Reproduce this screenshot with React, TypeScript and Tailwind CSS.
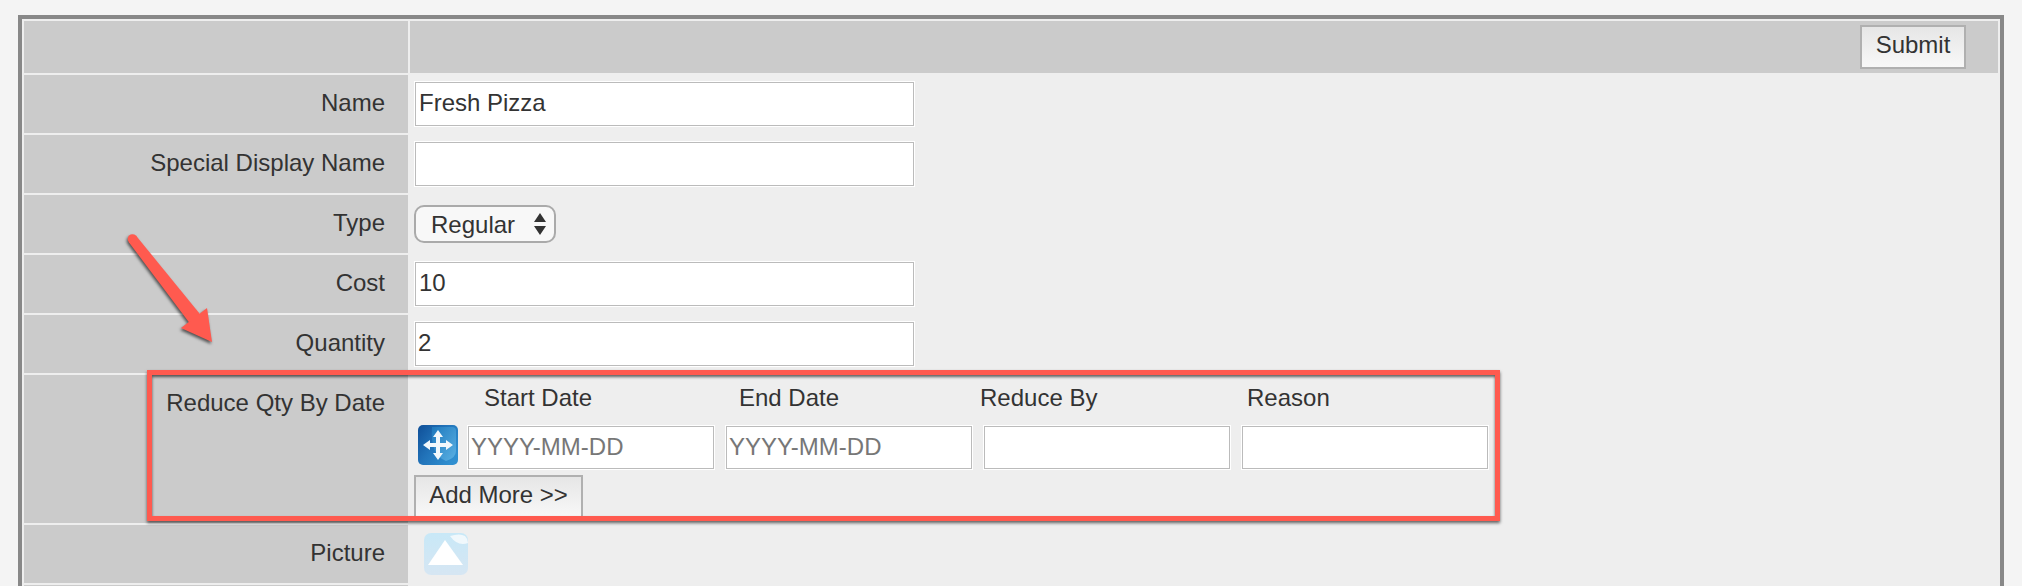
import React from "react";

function Field({ value, placeholder, className }: { value?: string; placeholder?: string; className: string }) {
  return (
    <input
      readOnly
      value={value ?? ""}
      placeholder={placeholder}
      className={`border border-white bg-white pb-[2px] pr-[3px] text-[24px] text-[#333] shadow-[inset_0_0_0_1px_#bbb] outline-none placeholder:text-[#777] ${className}`}
    />
  );
}

function Row({ label, children }: { label: string; children: React.ReactNode }) {
  return (
    <div className="flex h-[58px]">
      <div className="flex w-[384px] items-center justify-end bg-[#cbcbcb] pb-[3px] pr-[23px]">{label}</div>
      <div className="flex flex-1 items-center pl-[6px]">{children}</div>
    </div>
  );
}

function MoveIcon() {
  return (
    <svg viewBox="0 0 40 40" className="h-[40px] w-[40px] shrink-0">
      <defs>
        <linearGradient id="mv" x1="0" y1="0" x2="1" y2="0.7">
          <stop offset="0" stopColor="#0f4f98" />
          <stop offset="0.5" stopColor="#2274ba" />
          <stop offset="1" stopColor="#2f8fd0" />
        </linearGradient>
        <linearGradient id="mv2" x1="0" y1="0" x2="1" y2="1">
          <stop offset="0" stopColor="#1f7cc0" />
          <stop offset="1" stopColor="#62b6e6" />
        </linearGradient>
      </defs>
      <rect width="40" height="40" rx="5" fill="url(#mv)" />
      <path d="M14 2H34Q38 2 38 6V26Q38 33 28 36Q12 30 14 2Z" fill="url(#mv2)" opacity="0.85" />
      <path
        className="blur-[0.5px]"
        d="M20 5L25 12H22V18H28V15L35 20L28 25V22H22V28H25L20 35L15 28H18V22H12V25L5 20L12 15V18H18V12H15Z"
        fill="#f2f8fc"
      />
    </svg>
  );
}

function PictureIcon() {
  return (
    <svg viewBox="0 0 44 42" className="h-[42px] w-[44px] blur-[0.5px]">
      <defs>
        <linearGradient id="pc" x1="0" y1="0" x2="0" y2="1">
          <stop offset="0" stopColor="#c8e8f7" />
          <stop offset="1" stopColor="#d6e6f3" />
        </linearGradient>
      </defs>
      <rect width="44" height="42" rx="7" fill="url(#pc)" />
      <path d="M26 3Q36 0 41 3Q44 6 44 10Q34 14 26 3Z" fill="#f0f8fc" />
      <path d="M21 7L39 32H4Z" fill="#ffffff" />
    </svg>
  );
}

export default function App() {
  return (
    <div className="relative h-[586px] w-[2022px] overflow-hidden bg-[#f4f4f4] pl-[18px] pt-[15px] font-['Liberation_Sans',Arial,sans-serif] text-[24px] text-[#333]">
      <div className="flex w-[1986px] flex-col gap-[2px] border-4 border-[#888] bg-[#eee] p-[2px]">
        <div className="flex h-[52px] gap-[2px]">
          <div className="w-[384px] bg-[#cbcbcb]" />
          <div className="flex flex-1 items-start justify-end bg-[#cbcbcb] pr-[32px] pt-[4px]">
            <button className="h-[44px] w-[106px] border-2 border-[#b0b0b0] bg-gradient-to-b from-[#e6e6e6] to-[#f8f8f8] pb-[4px]">
              Submit
            </button>
          </div>
        </div>
        <Row label="Name">
          <Field value="Fresh Pizza" className="h-[46px] w-[501px] pl-[4px]" />
        </Row>
        <Row label="Special Display Name">
          <Field className="h-[46px] w-[501px] pl-[4px]" />
        </Row>
        <Row label="Type">
          <div className="relative h-[38px] w-[142px]">
            <select className="h-full w-full appearance-none rounded-[10px] border-2 border-[#aaa] bg-[#f8f8f8] pb-[3px] pl-[15px] outline-none">
              <option>Regular</option>
            </select>
            <svg viewBox="0 0 12 22" className="pointer-events-none absolute left-[120px] top-[8px] h-[22px] w-[12px]">
              <path d="M6 0L12 9H0Z M0 13H12L6 22Z" fill="#333" />
            </svg>
          </div>
        </Row>
        <Row label="Cost">
          <Field value="10" className="h-[46px] w-[501px] pl-[4px]" />
        </Row>
        <Row label="Quantity">
          <Field value="2" className="h-[46px] w-[501px] pl-[3px]" />
        </Row>
        <div className="flex h-[148px]">
          <div className="w-[384px] bg-[#cbcbcb] pr-[23px] pt-[16px] text-right leading-[24px]">Reduce Qty By Date</div>
          <div className="flex-1">
            <div className="ml-[76px] grid grid-cols-[255px_241px_267px_1fr] pt-[11px] leading-[24px]">
              <span>Start Date</span>
              <span>End Date</span>
              <span>Reduce By</span>
              <span>Reason</span>
            </div>
            <div className="mt-[15px] flex h-[45px] items-start pl-[10px]">
              <MoveIcon />
              <Field placeholder="YYYY-MM-DD" className="ml-[9px] h-[45px] w-[248px] pl-[3px]" />
              <Field placeholder="YYYY-MM-DD" className="ml-[10px] h-[45px] w-[248px] pl-[3px]" />
              <Field className="ml-[10px] h-[45px] w-[248px] pl-[3px]" />
              <Field className="ml-[10px] h-[45px] w-[248px] pl-[3px]" />
            </div>
            <button className="ml-[6px] mt-[5px] h-[44px] w-[169px] border-2 border-[#b0b0b0] bg-gradient-to-b from-[#e6e6e6] to-[#f8f8f8] pb-[5px]">
              Add More &gt;&gt;
            </button>
          </div>
        </div>
        <Row label="Picture">
          <div className="ml-[10px]">
            <PictureIcon />
          </div>
        </Row>
        <div className="h-[40px] w-[384px] bg-[#cbcbcb]" />
      </div>

      <div className="pointer-events-none absolute left-[147px] top-[370px] h-[151px] w-[1353px] border-[5px] border-[#ff5a4f] shadow-[0_2px_3px_rgba(0,0,0,0.6),inset_0_2px_3px_rgba(0,0,0,0.6)]" />

      <svg
        viewBox="0 0 100 125"
        className="pointer-events-none absolute left-[120px] top-[225px] h-[125px] w-[100px] [filter:drop-shadow(-1px_2px_1.5px_rgba(0,0,0,0.6))]"
      >
        <circle cx="12.5" cy="14" r="4.8" fill="#ff5a4f" />
        <path d="M16.3 11L84 94L74 104L8.7 17Z" fill="#ff5a4f" />
        <path d="M87 83L92 117L61 103Z" fill="#ff5a4f" />
      </svg>
    </div>
  );
}
